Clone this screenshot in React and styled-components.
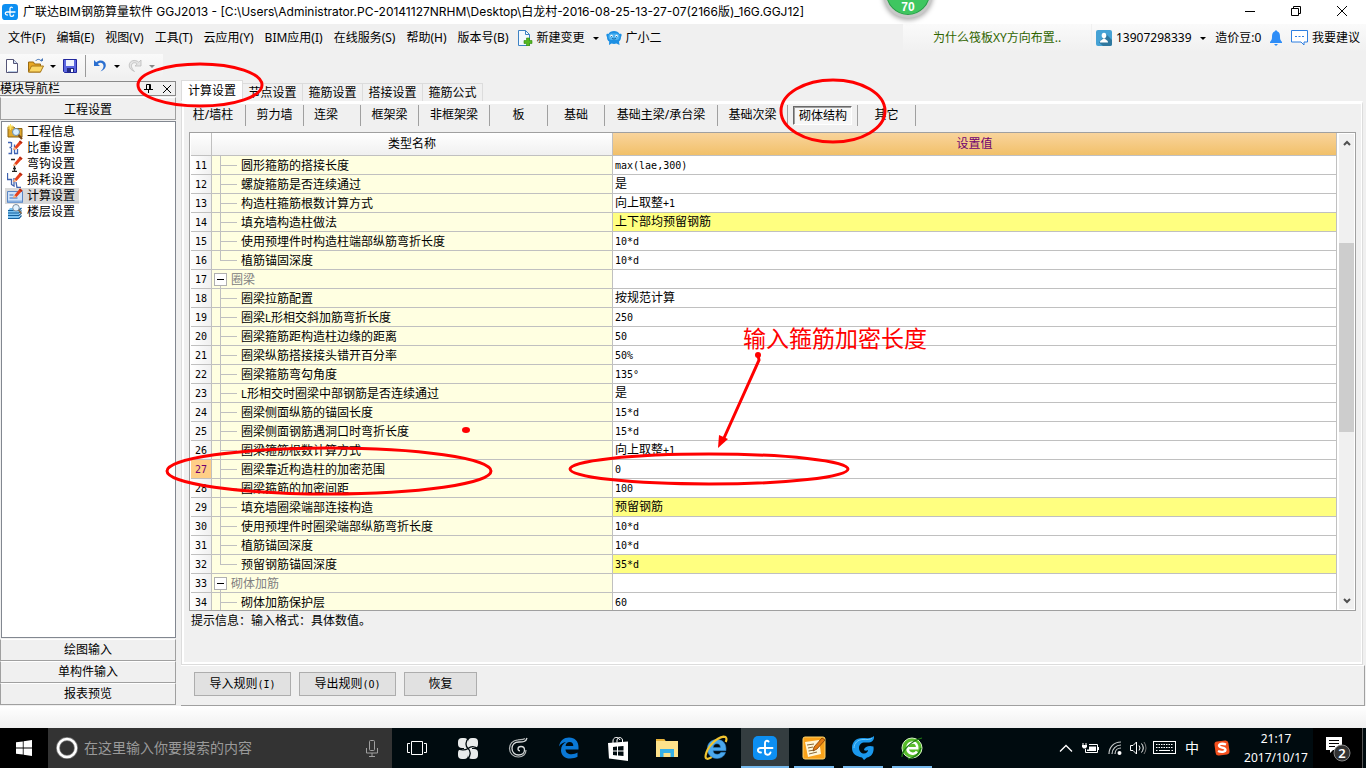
import React from "react";
import styled, { createGlobalStyle, css } from "styled-components";

const GlobalStyle = createGlobalStyle`
  *, *::before, *::after { box-sizing: border-box; }
  html, body, #root { height: 100%; }
  body {
    margin: 0;
    overflow: hidden;
    background: #f0f0f0;
    color: #000;
    font: 12px/16px "Noto Sans", "Noto Sans CJK SC", sans-serif;
  }
  button, input { font: inherit; color: inherit; }
  svg { display: block; flex: none; }
`;

const Screen = styled.div`
  position: relative;
  height: 100vh;
  display: flex;
  flex-direction: column;
  white-space: nowrap;
`;

const PlainButton = styled.button`
  display: flex;
  align-items: center;
  justify-content: center;
  padding: 0;
  border: 0;
  background: none;
`;

/* ---------- title bar ---------- */
const TitleBar = styled.header`
  display: flex;
  align-items: center;
  height: 24px;
  padding-left: 2px;
  background: #fff;
`;
const Title = styled.h1`
  flex: 1;
  margin: 0 0 0 5px;
  font: 400 12px/16px Inter, "Noto Sans CJK SC", sans-serif;
`;
const WindowButton = styled(PlainButton)`
  width: 46px;
  height: 24px;
  padding: 0 2px 3px 0;
`;

/* ---------- menu bar ---------- */
const MenuBar = styled.nav`
  display: flex;
  height: 28px;
  padding-left: 8px;
`;
const MenuItem = styled(PlainButton)`
  height: 28px;
  margin-right: ${(p) => p.$after ?? 11}px;
  gap: 4px;
`;
const News = styled.a`
  display: flex;
  align-items: center;
  width: 188px;
  margin-left: auto;
  padding-left: 30px;
  color: #2f6500;
  text-decoration: none;
  background: linear-gradient(#fafafa, #f0f0f0);
`;
const Account = styled.div`
  display: flex;
  align-items: center;
  width: 274px;
  margin-left: 1px;
  padding: 0 6px 0 4px;
  justify-content: space-between;
  background: linear-gradient(#fafafa, #f0f0f0);
`;
const AccountButton = styled(PlainButton)`
  gap: 4px;
`;
const Caret = styled.span`
  border: 3px solid transparent;
  border-top-color: ${(p) => (p.$dim ? "#888" : "#000")};
  border-bottom: 0;
`;

/* ---------- tool bar ---------- */
const ToolBar = styled.div`
  display: flex;
  align-items: center;
  align-self: flex-start;
  height: 24px;
  margin: 2px 0;
  padding: 0 3px 0 3px;
  background: linear-gradient(#fafafa, #f0f0f0);
`;
const Tool = styled(PlainButton)`
  width: ${(p) => p.$w}px;
  height: 24px;
`;
const ToolSeparator = styled.span`
  width: 1px;
  height: 22px;
  margin: 0 5px 0 2px;
  background: #999;
`;

/* ---------- main area ---------- */
const Main = styled.main`
  flex: 1;
  min-height: 0;
  display: flex;
  gap: 5px;
`;
const Side = styled.aside`
  display: flex;
  flex-direction: column;
  width: 176px;
  padding: 1px 0;
`;
const SideHeader = styled.div`
  display: flex;
  align-items: center;
  height: 15px;
  margin-bottom: 1px;
  padding-right: 1px;
  border: 1px solid #8a8a8a;
  border-left: 0;
`;
const SideTitle = styled.span`
  flex: 1;
`;
const SideHeaderButton = styled(PlainButton)`
  width: 15px;
  height: 13px;
  margin-left: 3px;
`;
const SideSection = styled.button`
  height: 22px;
  padding: 0;
  border: 1px solid #a0a0a0;
  border-top-color: #fff;
  background: #f0f0f0;
  &:first-of-type {
    height: 23px;
    padding-top: 2px;
  }
`;
const SideList = styled.ul`
  flex: 1;
  min-height: 0;
  margin: 1px 0 1px 1px;
  padding: 2px 3px;
  list-style: none;
  border: 1px solid #828790;
  background: #fff;
`;
const SideLink = styled.a`
  display: inline-flex;
  align-items: center;
  gap: 4px;
  height: 16px;
  padding: 0 4px 0 2px;
  vertical-align: top;
  color: #000;
  text-decoration: none;
  background: ${(p) => (p.$active ? "#d9d9d9" : "none")};
`;
const SideItem = styled.li`
  height: 16px;
`;

const Content = styled.section`
  flex: 1;
  min-width: 0;
  display: flex;
  flex-direction: column;
`;
const Tabs = styled.div`
  display: flex;
  align-items: flex-end;
  height: 21px;
`;
const Tab = styled.button`
  height: 18px;
  width: 60px;
  padding: 0;
  border: 1px solid #dcdcdc;
  border-left: 0;
  border-bottom: 0;
  background: #f0f0f0;
  ${(p) =>
    p.$active &&
    css`
      width: 62px;
      height: 21px;
      border-left: 1px solid #dcdcdc;
      background: #fff;
    `}
`;
const TabPage = styled.div`
  flex: 1;
  min-height: 0;
  display: flex;
  flex-direction: column;
  margin-right: 3px;
  padding: 0 4px 0 4px;
  border: 1px solid #dcdcdc;
  border-top: 3px solid #fff;
  box-shadow: inset 2px 0 #fff, inset -1px -2px #fff;
`;
const Categories = styled.div`
  display: flex;
  align-items: center;
  height: 28px;
  margin-left: -1px;
  padding-bottom: 6px;
`;
const Category = styled(PlainButton)`
  width: ${(p) => p.$w}px;
  height: 21px;
  padding-right: ${(p) => p.$pad ?? 0}px;
  border-right: 1px solid #a0a0a0;
`;
const Pressed = styled.span`
  padding: 1px 4px 0 5px;
  border: 1px solid #696969;
  border-right-color: #fff;
  border-bottom-color: #fff;
  background: #f7f7f7;
  box-shadow: inset 1px 1px #a0a0a0;
`;

/* ---------- settings grid ---------- */
const GridFrame = styled.div`
  flex: 1;
  min-height: 0;
  display: flex;
  overflow: hidden;
  margin-right: 2px;
  margin-left: 3px;
  padding-left: 1px;
  border: 1px solid #a0a0a0;
  background: #fff;
`;
const GridViewport = styled.div`
  flex: 1;
  min-width: 0;
  overflow: hidden;
`;
const Grid = styled.table`
  width: 100%;
  table-layout: fixed;
  border-collapse: separate;
  border-spacing: 0;
`;
const HeadCell = styled.th`
  width: ${(p) => (p.$w ? `${p.$w}px` : "auto")};
  height: 23px;
  padding: 0;
  border-right: 1px solid #c0c0c0;
  border-bottom: 1px solid #c0c0c0;
  font-weight: 400;
  color: ${(p) => (p.$active ? "#700070" : "#000")};
  background: ${(p) =>
    p.$active
      ? "linear-gradient(#f9d49c, #f1c069)"
      : "linear-gradient(#fff, #f0f0f0)"};
`;
const NumberCell = styled.th`
  height: 19px;
  padding: 0;
  border-right: 1px solid #c0c0c0;
  border-bottom: 1px solid #c0c0c0;
  font-weight: 400;
  color: ${(p) => (p.$active ? "#700070" : "#000")};
  background: ${(p) =>
    p.$active ? "#ffcf87" : "linear-gradient(90deg, #fff, #f0f0f0)"};
`;
const Cell = styled.td`
  height: 19px;
  padding: 0 0 0 ${(p) => p.$pad ?? 0}px;
  border-right: 1px solid #c0c0c0;
  border-bottom: 1px solid #c0c0c0;
  line-height: 16px;
  background: ${(p) => p.$bg};
`;
const line = "linear-gradient(#c0c0c0, #c0c0c0)";
const Branch = styled.div`
  height: 18px;
  padding: 3px 0 0 29px;
  line-height: 14px;
  background: ${line} 8px 0 / 1px ${(p) => (p.$last ? "9px" : "18px")} no-repeat,
    ${line} 8px 9px / 17px 1px no-repeat;
`;
const Group = styled.div`
  display: flex;
  align-items: center;
  gap: 4px;
  height: 18px;
  padding-left: 2px;
  color: #808080;
  background: ${line} 8px 14px / 1px 4px no-repeat;
`;
const GroupName = styled.span`
  padding-top: 2px;
`;
const Toggle = styled(PlainButton)`
  width: 13px;
  height: 13px;
  border: 1px solid #b0b0b0;
  background: #fff;
  &::before {
    content: "";
    width: 7px;
    height: 1px;
    background: #000;
  }
`;
const Mono = styled.span`
  font-family: "DejaVu Sans Mono", monospace;
  font-size: 10px;
`;
const ScrollBar = styled.div`
  display: flex;
  flex-direction: column;
  align-items: center;
  width: 15px;
  margin: 1px 1px 1px 2px;
  background: #f0f0f0;
`;
const ScrollArrow = styled(PlainButton)`
  width: 15px;
  height: 17px;
`;
const ScrollTrack = styled.div`
  flex: 1;
  align-self: stretch;
  display: flex;
  flex-direction: column;
`;
const ScrollSpace = styled.div`
  flex: ${(p) => p.$share};
`;
const ScrollThumb = styled.div`
  flex: 190;
  background: #cdcdcd;
`;
const Hint = styled.p`
  height: 53px;
  margin: 0;
  padding: 2px 0 0 5px;
`;
const Actions = styled.div`
  display: flex;
  gap: 8px;
  height: 41px;
  margin-right: 1px;
  padding: 6px 0 0 13px;
  border: 1px solid #a0a0a0;
  border-top-color: #fff;
  border-left: 0;
`;
const Action = styled.button`
  width: ${(p) => p.$w}px;
  height: 24px;
  padding: 0;
  border: 1px solid #adadad;
  background: #e1e1e1;
`;
const StatusBar = styled.div`
  height: 22px;
  background: linear-gradient(#fff, #f0f0f0);
`;

/* ---------- task bar ---------- */
const TaskBar = styled.footer`
  display: flex;
  height: 40px;
  background: #000b0f;
  color: #fff;
`;
const Start = styled(PlainButton)`
  width: 48px;
  background: #000;
`;
const Search = styled.label`
  display: flex;
  align-items: center;
  gap: 6px;
  width: 344px;
  padding: 0 14px 0 8px;
  background: #333;
`;
const SearchInput = styled.input`
  flex: 1;
  min-width: 0;
  padding: 0;
  border: 0;
  outline: 0;
  background: none;
  font-size: 14px;
  &::placeholder { color: #9a9a9a; opacity: 1; }
`;
const Apps = styled.div`
  display: flex;
  flex: 1;
  gap: 1px;
`;
const AppButton = styled(PlainButton)`
  width: ${(p) => (p.$wide ? 50 : 48)}px;
  padding-top: 2px;
  border-bottom: 2px solid transparent;
  ${(p) =>
    p.$state === "open" &&
    css`
      background: linear-gradient(#76b9ed, #76b9ed) center bottom / 40px 2px no-repeat;
      background-origin: border-box;
      background-clip: border-box;
    `}
  ${(p) =>
    p.$state === "active" &&
    css`
      background-color: #343d40;
      border-bottom-color: #76b9ed;
    `}
`;
const Tray = styled.div`
  display: flex;
  align-items: center;
`;
const TrayButton = styled(PlainButton)`
  width: ${(p) => p.$w}px;
  height: 40px;
  font-size: 14px;
`;
const Clock = styled.time`
  width: 74px;
  text-align: center;
  line-height: 19px;
`;
const Notices = styled(PlainButton)`
  width: 50px;
  height: 40px;
  padding-top: 2px;
  border-right: 1px solid #555;
  background: #000;
`;
const TrayEnd = styled.span`
  width: 3px;
`;

/* ---------- things that lie over the window ---------- */
const Ball = styled.div`
  position: absolute;
  top: -32px;
  left: 883px;
  width: 50px;
  height: 50px;
  padding-top: 28px;
  border: 3px solid #c8c8c8;
  border-radius: 50%;
  background: #3fc660;
  box-shadow: 0 2px 5px rgba(0, 0, 0, 0.35), inset 0 0 0 1px #2a9a48;
  color: #fff;
  font: 700 12px/16px "Liberation Sans", sans-serif;
  text-align: center;
`;
const Marks = styled.svg`
  position: absolute;
  top: 0;
  left: 0;
  pointer-events: none;
`;
const Note = styled.div`
  position: absolute;
  top: 324px;
  left: 743px;
  color: #f00;
  font: 400 23px/26px "Noto Sans CJK SC", sans-serif;
`;

/* Sets the Latin runs of a label in the narrow fixed-width face. */
function Label({ children }) {
  return children
    .split(/([\x20-\x7e°]+)/)
    .filter(Boolean)
    .map((part, i) =>
      /^[\x20-\x7e°]/.test(part) ? <Mono key={i}>{part}</Mono> : part
    );
}

/* ---------- icons ---------- */
function Svg({ w = 16, h = w, box, children }) {
  return (
    <svg width={w} height={h} viewBox={box || `0 0 ${w} ${h}`} fill="none" aria-hidden="true">
      {children}
    </svg>
  );
}
const BrandIcon = ({ size = 16 }) => (
  <Svg w={size} box="0 0 24 24">
    <rect width="24" height="24" rx="5" fill="#0d8ff2" />
    <path d="M15.500 5.500C14 4 12 5 12 7v9c0 3.500 4.500 3.500 5.500 .5M19.500 12H7.500c-3.500 0-3.500 4.500 .5 4.500" stroke="#fff" strokeWidth="1.900" strokeLinecap="round" />
  </Svg>
);
const NewIcon = () => (
  <Svg>
    <path d="M2.500 1.500h7l4 4v9h-11z" fill="#fff" stroke="#557" />
    <path d="M9.500 1.500v4h4" fill="#cfe0f5" stroke="#557" />
    <path d="M4 13.500h9" stroke="#b8cce6" />
  </Svg>
);
const OpenIcon = () => (
  <Svg w={17} h={16} box="0 0 16 16">
    <path d="M1 14V4h5l1 2h6v8z" fill="#e8a825" stroke="#9a6a10" />
    <path d="M1 14l3-6h12l-3 6z" fill="#fbd765" stroke="#a87718" />
    <path d="M8 3c2-2.500 5-2 6 .5" stroke="#4a78b8" />
    <path d="M12 3h3.500V0z" fill="#4a78b8" />
  </Svg>
);
const SaveIcon = () => (
  <Svg>
    <path d="M1.500 1.500h13v13h-12l-1-1z" fill="#5b67e0" stroke="#22279c" />
    <path d="M4 2h8v6H4z" fill="#eef3fd" />
    <path d="M5 10h7v4H5z" fill="#222a80" />
    <path d="M9 11h2v3H9z" fill="#fff" />
  </Svg>
);
const UndoIcon = () => (
  <Svg>
    <path d="M2 2v6h6L5.800 6C8 3.500 12 5 11.500 8.500c-.3 2-1.500 3.500-3 5C12 12 14 10 13.800 7 13.500 2.500 8 1 4.200 4.200z" fill="#2b6fd0" />
  </Svg>
);
const RedoIcon = () => (
  <Svg>
    <path d="M14 2v6H8l2.200-2C8 3.500 4 5 4.500 8.500c.3 2 1.500 3.500 3 5C4 12 2 10 2.200 7 2.500 2.500 8 1 11.800 4.200z" fill="#e4e4e4" stroke="#bbb" strokeWidth=".8" />
  </Svg>
);
const ChangeIcon = () => (
  <Svg>
    <path d="M1.500 .5h7l4 4v11h-11z" fill="#f3f9ff" stroke="#3d82c4" />
    <path d="M8.500 .5v4h4" stroke="#3d82c4" />
    <path d="M9.500 8h3v2.500H15v3h-2.500V16h-3v-2.500H7v-3h2.500z" fill="#55b822" stroke="#2f8a0c" strokeWidth=".6" />
  </Svg>
);
const RobotIcon = () => (
  <Svg>
    <path d="M1 7C-.5 4 1 3 2.500 4 4 0 12 0 13.500 4 15 3 16.500 4 15 7c0 2-.8 3.500-2 4.500l.5 3.500-3-1.500c-2 .6-3 .6-5 0L3 15l.2-3.500C1.600 10.500 1 9 1 7z" fill="#1c8fe3" />
    <rect x="2.500" y="3.500" width="11" height="6.500" rx="3" fill="#4fb4f2" />
    <circle cx="5.500" cy="6" r="1.200" fill="#fff" />
    <circle cx="10.500" cy="6" r="1.200" fill="#fff" />
    <path d="M5.500 6v1M10.500 6v1M6 8.500q2 1.200 4 0" stroke="#07538f" strokeWidth=".8" />
  </Svg>
);
const UserIcon = () => (
  <Svg>
    <rect width="16" height="16" rx="2" fill="#45a2d5" />
    <path d="M10 4l6 6v4a2 2 0 0 1-2 2H7l-4-3.500z" fill="#2f789f" />
    <ellipse cx="8" cy="5.500" rx="2.300" ry="2.800" fill="#fff" />
    <path d="M4 12.500c0-3 2.500-2 3-4h2c.5 2 3 1 3 4z" fill="#fff" />
  </Svg>
);
const BellIcon = () => (
  <Svg w={12} h={16}>
    <path d="M6 0l1.500 1.500C9.500 2.500 10 4 10 7c0 2 .5 3.500 2 5v1H0v-1c1.500-1.500 2-3 2-5 0-3 .5-4.500 2.500-5.500z" fill="#2e8df7" />
    <path d="M4 14h4l-2 2z" fill="#2e8df7" />
  </Svg>
);
const BubbleIcon = () => (
  <Svg w={17} h={16}>
    <path d="M.5.500h16v11.500h-3.500v3l-3-3H.5z" fill="#fff" stroke="#2e7fe0" />
    <path d="M4 6.500h2M7.500 6.500h2M11 6.500h2" stroke="#2e7fe0" />
  </Svg>
);
const Pencil = () => (
  <>
    <path d="M6 10l1.500-3L13 .500l2.500 2L9.500 9z" fill="#e8401c" />
    <path d="M13 .5l2.500 2-1 1.200L12 1.700z" fill="#b52a10" />
    <path d="M6 10l1.500-3L9.500 9z" fill="#f5c08a" />
  </>
);
const InfoIcon = () => (
  <Svg>
    <path d="M1 3h6l1 1.500h7V13H1z" fill="#e0a82e" stroke="#8a6210" />
    <path d="M3.500 0v6M.5 3h6M1.500 1l4 4M5.500 1l-4 4" stroke="#ffe45c" />
    <circle cx="9" cy="8" r="3.500" fill="#d9efff" stroke="#6a8cab" />
    <path d="M11.500 11l3.500 4" stroke="#7a4a18" strokeWidth="2" />
  </Svg>
);
const WeightIcon = () => (
  <Svg>
    <path d="M1 2.500h3M4.500 2v5M2.500 7.500h2M4.500 8v5.500H1.500M7.500 4.500V13M7 13.500h3.500V9" stroke="#4064b4" strokeWidth="1.300" />
    <Pencil />
  </Svg>
);
const HookIcon = () => (
  <Svg>
    <path d="M4 3.500h4M5 15.500h5M7.500 10v5M6 12.500h3" stroke="#222" strokeWidth="1.300" />
    <Pencil />
  </Svg>
);
const LossIcon = () => (
  <Svg>
    <path d="M.5 1v6.500h4v5L7 14V6M9 10l1 5.500h4" stroke="#3f62ae" strokeWidth="1.300" />
    <Pencil />
  </Svg>
);
const CalcIcon = () => (
  <Svg>
    <path d="M.5 3.500h15v11H.5z" fill="#cfe3fb" stroke="#5b86c4" />
    <path d="M1 13.500h14" stroke="#86aede" strokeWidth="2" />
    <path d="M2.500 7h4M2.500 10h8" stroke="#3f6fb8" />
    <Pencil />
  </Svg>
);
const FloorIcon = () => (
  <Svg>
    <path d="M3 4h11l-2 2.500v8H1V6.500z" fill="#7cc3f2" />
    <path d="M1 6.500h11l2.500-2.500M1 9h11l2.500-2.500M1 11.500h11L14.500 9M1 14.500h11l2.500-3" stroke="#15609c" strokeWidth="1.200" />
    <circle cx="9" cy="3.800" r="3.300" fill="#e3f3ff" stroke="#7c8c9c" />
    <path d="M11.500 6l3 3.500" stroke="#8a6a48" strokeWidth="1.500" />
  </Svg>
);
const WindowsIcon = () => (
  <Svg w={16}>
    <path d="M0 2.300L6.800 1.400v6.200H0zM7.600 1.300L16 0v7.600H7.600zM0 8.400h6.800v6.200L0 13.700zM7.600 8.400H16V16l-8.400-1.300z" fill="#fff" />
  </Svg>
);
const CortanaIcon = () => (
  <Svg w={22}>
    <circle cx="11" cy="11" r="9" stroke="#777" strokeWidth="4" />
    <circle cx="11" cy="11" r="9" stroke="#fff" strokeWidth="2.500" />
  </Svg>
);
const MicIcon = () => (
  <Svg w={12} h={17}>
    <rect x="3.500" y=".5" width="5" height="10" rx="1" stroke="#a0a0a0" />
    <path d="M.5 8v5h11V8M6 13v3.500M3 16.500h6" stroke="#a0a0a0" />
  </Svg>
);
const TaskViewIcon = () => (
  <Svg w={20} h={16}>
    <path d="M4.500 1.500h11v13h-11zM3 3.500H.5v9H3M17 3.500h2.500v9H17" stroke="#fff" />
  </Svg>
);
const PinwheelIcon = () => (
  <Svg w={22} h={23}>
    <g fill="#e8ebeb">
      <rect x="1" y="1" width="10" height="10" rx="4" />
      <rect x="11" y="1" width="10" height="10" rx="4" />
      <rect x="1" y="12" width="10" height="10" rx="4" />
      <rect x="11" y="12" width="10" height="10" rx="4" />
      <path d="M7 7h8v9H7z" />
    </g>
    <path d="M11 11.500C8 9 8.500 4 12 .5M11 11.500c3-2.500 7-2.500 11 1M11 11.500c3 2.500 3 7-.5 11M11 11.500c-3 2-8 2-11-1" stroke="#000b0f" strokeWidth="1.300" />
  </Svg>
);
const SwirlIcon = () => (
  <Svg w={22}>
    <path d="M19 1c-1 4-4 4-8 4-5 0-7 3-7 6.500 0 4 3 6.500 6.500 6.500 4 0 6-2.500 6-5 0-2-1.500-3.500-3.500-3.500s-3 1-3 2.500c0 1 .8 1.800 2 1.800" stroke="#d8dcdc" strokeWidth="1.300" />
    <path d="M17 1.500c-2 1.500-4 1-7 1.300C4.500 3.200 1.500 7 1.500 11.500c0 5 4 8.500 9 8.500 4.500 0 7.500-3 7.500-7" stroke="#b0b5b5" strokeWidth="1.200" />
  </Svg>
);
const EdgeIcon = () => (
  <Svg w={22}>
    <path d="M1 9.500C2 3.500 6 .5 11 .5c6 0 9.500 4 9.500 9.500v2.500H7.500c.2 3.200 2.500 4.700 6 4.700 2.300 0 4.300-.6 6-1.600v4.200c-2 1.200-4.500 1.700-7.300 1.700C6.500 21.500 3 18 3 13.200 3 9.500 5 6.500 8 5 5 5.300 2.500 7 1 9.500zM7.600 9h7.700c0-2.500-1.300-4-3.600-4S7.900 6.500 7.600 9z" fill="#0a78d6" />
  </Svg>
);
const StoreIcon = () => (
  <Svg w={21} h={25} box="0 0 21 25">
    <path d="M0 7l20-1.500V25L1 22.500z" fill="#fff" />
    <path d="M5 7V5c0-4 5-5 7-1M9 6.500V4c1-3.500 5-3 5.500 0v2" stroke="#fff" />
    <path d="M5 11l4-.4v4H5zM10 10.500l5.500-.5v4.600H10zM5 15.500h4v4l-4-.5zM10 15.500h5.500V20l-5.500-.5z" fill="#000b0f" />
  </Svg>
);
const FolderIcon = () => (
  <Svg w={22} h={20}>
    <path d="M0 1h8l1.500 2H22v16H0z" fill="#fde28b" />
    <path d="M0 1h8l1.500 2H0z" fill="#e8b33a" />
    <path d="M4 19v-8h14v8h-3.500v-4h-7v4z" fill="#35b0e8" />
  </Svg>
);
const IeIcon = () => (
  <Svg w={26} box="0 0 24 24">
    <path d="M4 12c.5-5 4-7.800 8.800-7.800 6 0 9 4.300 8.400 10.300H9.300c.3 2.200 1.700 3.300 3.900 3.300 1.600 0 2.700-.6 3.300-1.800h4.300c-1 3.700-4.200 5.700-7.800 5.700-5.700 0-9.100-4-9-9.700zM9.400 11.500h6.700c0-2.200-1.300-3.400-3.200-3.400-2 0-3.200 1.200-3.500 3.400z" fill="#4aa8ec" stroke="#2c7cc4" strokeWidth=".5" />
    <path d="M8 20.500c-3 2-6.500 2.500-5.500-2C4 11 12 2.500 19 1.500c3 0 3.200 2.500 2 5" stroke="#f2c530" strokeWidth="2" />
  </Svg>
);
const NotesIcon = () => (
  <Svg w={24}>
    <rect x="1" y="1" width="22" height="22" rx="2" fill="#f9a21a" stroke="#ffd36a" />
    <path d="M3 6l14-2 2 14-13 3z" fill="#fff6d8" />
    <path d="M5 9l7-1M6 12l5-1M6.500 15l6-1M7 18l8-2" stroke="#8a6a38" />
    <path d="M11 15l1-4 8-9 3 2-8 9z" fill="#e47c12" stroke="#7a3c08" strokeWidth=".8" />
  </Svg>
);
const BlueSwirlIcon = () => (
  <Svg w={24}>
    <path d="M23 0c.5 5-3 7-8 6.500-4-.5-7 1.500-7 5.500 0 3.500 2.500 5.500 5 5.500 2.300 0 3.800-1.300 4-3.500-1.500 1-3.500 1-4-.5 1-3 5-4.500 9.500-3 1 7-3 10.500-6.500 11l-3 2.500-2-2.500C5 20.500 1 17.500 1 12 1 6 5 2 11 2c5 0 9 1 12-2z" fill="#1a98ec" />
    <path d="M3 12c0-5 4-8.500 9-8.500 4 0 7 .5 9-1.500" stroke="#6ccbff" />
  </Svg>
);
const GreenEIcon = () => (
  <Svg w={22} h={24}>
    <circle cx="11" cy="12" r="10" fill="#58bd2a" stroke="#d5f2c4" />
    <path d="M16 15.500c-2 3.500-9.500 3-9.500-3.500s7.500-6.500 9-3.500c.7 1.300 .8 2.300 .7 3.700H7" stroke="#fff" strokeWidth="2.600" />
    <path d="M1 21c-.5-5 8-16 20-19M7 23c6-1 11-5 13-11" stroke="#1d7a12" strokeWidth="1.200" />
  </Svg>
);
const ChevronIcon = () => (
  <Svg w={14} h={8}><path d="M1 7.500l6-6 6 6" stroke="#fff" strokeWidth="1.300" /></Svg>
);
const BatteryIcon = () => (
  <Svg w={17} h={12}>
    <path d="M7 2.500h8.500v8H3.500V7" stroke="#fff" />
    <path d="M7 4.500h7v4.500H5V7.500h2zM16 5h1v3h-1z" fill="#fff" />
    <path d="M1 1v2M4 1v2" stroke="#fff" />
    <path d="M0 3h5v2L3.500 6.500h-2L0 5z" fill="#fff" />
  </Svg>
);
const WifiIcon = () => (
  <Svg w={14}>
    <path d="M1 13C1 6 6 1 13 1M4 13c0-5 4-9 9-9M7 13c0-3.500 2.500-6 6-6" stroke="#c8cccc" strokeWidth="1.200" />
    <circle cx="11.500" cy="12" r="2" fill="#fff" />
  </Svg>
);
const SpeakerIcon = () => (
  <Svg w={17} h={14}>
    <path d="M.5 4.500h2.500L6.500 1v12L3 9.500H.5z" stroke="#fff" />
    <path d="M9 4.500q2 2.500 0 5M11.500 2.500q3.500 4.500 0 9" stroke="#fff" />
    <path d="M14 1q4 6 0 12" stroke="#777" />
  </Svg>
);
const KeyboardIcon = () => (
  <Svg w={23} h={14}>
    <rect x=".5" y=".5" width="22" height="12" stroke="#fff" />
    <path d="M3 3.500h17M3 6.500h17" stroke="#fff" strokeDasharray="1.500 1" />
    <path d="M3 9.500h1.500M6 9.500h11M18.500 9.500H20" stroke="#fff" />
  </Svg>
);
const SogouIcon = () => (
  <Svg w={16}>
    <rect x="1" y="1" width="14" height="14" rx="3" fill="#f4501e" transform="rotate(-8 8 8)" />
    <path d="M12 4.500C8 3 4.500 4 5 6s6.500 1.500 6.500 3.800S7 12.500 4 11" stroke="#fff" strokeWidth="2.300" />
  </Svg>
);
const NoticeIcon = () => (
  <svg width="26" height="26" viewBox="0 0 26 26" role="img" aria-label="2">
    <path d="M1 1h16v13H8l-3 3v-3H1z" fill="#fff" />
    <path d="M4 4.500h10M4 7.500h10M4 10.500h6" stroke="#000" />
    <circle cx="17" cy="17" r="8" fill="#333" stroke="#888" />
    <text x="17" y="22" textAnchor="middle" fill="#fff" fontSize="13" fontWeight="600">2</text>
  </svg>
);

/* ---------- data ---------- */
const menus = ["文件(F)", "编辑(E)", "视图(V)", "工具(T)", "云应用(Y)", "BIM应用(I)", "在线服务(S)", "帮助(H)"];
const sideItems = [
  ["工程信息", InfoIcon],
  ["比重设置", WeightIcon],
  ["弯钩设置", HookIcon],
  ["损耗设置", LossIcon],
  ["计算设置", CalcIcon],
  ["楼层设置", FloorIcon],
];
const tabs = ["计算设置", "节点设置", "箍筋设置", "搭接设置", "箍筋公式"];
const categories = [
  ["柱/墙柱", 61, 4], ["剪力墙", 58], ["连梁", 57, 12], ["框架梁", 58], ["非框架梁", 71],
  ["板", 58], ["基础", 57], ["基础主梁/承台梁", 113], ["基础次梁", 70], ["砌体结构", 70], ["其它", 58],
];
const rows = [
  { no: 11, name: "圆形箍筋的搭接长度", value: "max(lae,300)" },
  { no: 12, name: "螺旋箍筋是否连续通过", value: "是" },
  { no: 13, name: "构造柱箍筋根数计算方式", value: "向上取整+1" },
  { no: 14, name: "填充墙构造柱做法", value: "上下部均预留钢筋", changed: true },
  { no: 15, name: "使用预埋件时构造柱端部纵筋弯折长度", value: "10*d" },
  { no: 16, name: "植筋锚固深度", value: "10*d", last: true },
  { no: 17, name: "圈梁", group: true, value: "" },
  { no: 18, name: "圈梁拉筋配置", value: "按规范计算" },
  { no: 19, name: "圈梁L形相交斜加筋弯折长度", value: "250" },
  { no: 20, name: "圈梁箍筋距构造柱边缘的距离", value: "50" },
  { no: 21, name: "圈梁纵筋搭接接头错开百分率", value: "50%" },
  { no: 22, name: "圈梁箍筋弯勾角度", value: "135°" },
  { no: 23, name: "L形相交时圈梁中部钢筋是否连续通过", value: "是" },
  { no: 24, name: "圈梁侧面纵筋的锚固长度", value: "15*d" },
  { no: 25, name: "圈梁侧面钢筋遇洞口时弯折长度", value: "15*d" },
  { no: 26, name: "圈梁箍筋根数计算方式", value: "向上取整+1" },
  { no: 27, name: "圈梁靠近构造柱的加密范围", value: "0", active: true },
  { no: 28, name: "圈梁箍筋的加密间距", value: "100" },
  { no: 29, name: "填充墙圈梁端部连接构造", value: "预留钢筋", changed: true },
  { no: 30, name: "使用预埋件时圈梁端部纵筋弯折长度", value: "10*d" },
  { no: 31, name: "植筋锚固深度", value: "10*d" },
  { no: 32, name: "预留钢筋锚固深度", value: "35*d", changed: true, last: true },
  { no: 33, name: "砌体加筋", group: true, value: "" },
  { no: 34, name: "砌体加筋保护层", value: "60" },
];
const apps = [
  ["任务视图", TaskViewIcon], ["浏览器助手", PinwheelIcon], ["云助手", SwirlIcon], ["Edge", EdgeIcon],
  ["应用商店", StoreIcon], ["文件资源管理器", FolderIcon], ["Internet Explorer", IeIcon],
  ["钢筋算量", () => <BrandIcon size={24} />, "active"], ["便笺", NotesIcon, "open"],
  ["广联达", BlueSwirlIcon, "open"], ["360浏览器", GreenEIcon, "open"],
];

export default function App() {
  return (
    <Screen>
      <GlobalStyle />
      <TitleBar>
        <BrandIcon />
        <Title>
          广联达BIM钢筋算量软件 GGJ2013 - [C:\Users\Administrator.PC-20141127NRHM\Desktop\白龙村-2016-08-25-13-27-07(2166版)_16G.GGJ12]
        </Title>
        <WindowButton aria-label="最小化"><Svg w={10}><path d="M0 5.500h10" stroke="#000" /></Svg></WindowButton>
        <WindowButton aria-label="还原"><Svg w={10}><path d="M.5 2.500h7v7h-7zM2.500 2V.5h7v7H8" stroke="#000" /></Svg></WindowButton>
        <WindowButton aria-label="关闭"><Svg w={10}><path d="M0 0l10 10M10 0L0 10" stroke="#000" /></Svg></WindowButton>
      </TitleBar>

      <MenuBar>
        {menus.map((m) => <MenuItem key={m}>{m}</MenuItem>)}
        <MenuItem $after={8}>版本号(B)</MenuItem>
        <MenuItem $after={8}><ChangeIcon />新建变更</MenuItem>
        <MenuItem $after={7} aria-label="更多"><Caret /></MenuItem>
        <MenuItem $after={0}><RobotIcon />广小二</MenuItem>
        <News href="#news">为什么筏板XY方向布置..</News>
        <Account>
          <AccountButton><UserIcon />13907298339</AccountButton>
          <Caret />
          <span>造价豆:0</span>
          <AccountButton aria-label="消息"><BellIcon /></AccountButton>
          <AccountButton><BubbleIcon />我要建议</AccountButton>
        </Account>
      </MenuBar>

      <ToolBar>
        <Tool $w={18} aria-label="新建"><NewIcon /></Tool>
        <Tool $w={28} aria-label="打开"><OpenIcon /></Tool>
        <Tool $w={8} aria-label="打开列表"><Caret /></Tool>
        <Tool $w={26} aria-label="保存"><SaveIcon /></Tool>
        <ToolSeparator />
        <Tool $w={18} aria-label="撤销"><UndoIcon /></Tool>
        <Tool $w={16} aria-label="撤销列表"><Caret /></Tool>
        <Tool $w={19} aria-label="恢复"><RedoIcon /></Tool>
        <Tool $w={16} aria-label="恢复列表"><Caret $dim /></Tool>
      </ToolBar>

      <Main>
        <Side>
          <SideHeader>
            <SideTitle>模块导航栏</SideTitle>
            <SideHeaderButton aria-label="固定">
              <Svg w={9}><path d="M2.500 5V.500h4V5M0 5.500h9M4.500 6v3M5.500 1v4" stroke="#000" /></Svg>
            </SideHeaderButton>
            <SideHeaderButton aria-label="关闭">
              <Svg w={8}><path d="M0 0l8 8M8 0L0 8" stroke="#000" /></Svg>
            </SideHeaderButton>
          </SideHeader>
          <SideSection>工程设置</SideSection>
          <SideList>
            {sideItems.map(([text, Icon]) => (
              <SideItem key={text}>
                <SideLink href="#settings" $active={text === "计算设置"}><Icon />{text}</SideLink>
              </SideItem>
            ))}
          </SideList>
          <SideSection>绘图输入</SideSection>
          <SideSection>单构件输入</SideSection>
          <SideSection>报表预览</SideSection>
        </Side>

        <Content>
          <Tabs role="tablist">
            {tabs.map((t, i) => (
              <Tab key={t} role="tab" aria-selected={i === 0} $active={i === 0}>{t}</Tab>
            ))}
          </Tabs>
          <TabPage>
            <Categories>
              {categories.map(([text, w, pad]) => (
                <Category key={text} $w={w} $pad={pad}>
                  {text === "砌体结构" ? <Pressed>{text}</Pressed> : text}
                </Category>
              ))}
            </Categories>
            <GridFrame>
              <GridViewport>
                <Grid>
                  <thead>
                    <tr>
                      <HeadCell $w={21} />
                      <HeadCell $w={401}>类型名称</HeadCell>
                      <HeadCell $active>设置值</HeadCell>
                    </tr>
                  </thead>
                  <tbody>
                    {rows.map((r) => (
                      <tr key={r.no}>
                        <NumberCell scope="row" $active={r.active}><Mono>{r.no}</Mono></NumberCell>
                        <Cell $bg="#ffffe1">
                          {r.group ? (
                            <Group><Toggle aria-label="折叠" /><GroupName>{r.name}</GroupName></Group>
                          ) : (
                            <Branch $last={r.last}><Label>{r.name}</Label></Branch>
                          )}
                        </Cell>
                        <Cell $pad={2} $bg={r.changed ? "#ffff80" : "#fff"}><Label>{r.value}</Label></Cell>
                      </tr>
                    ))}
                  </tbody>
                </Grid>
              </GridViewport>
              <ScrollBar>
                <ScrollArrow aria-label="向上"><Svg w={8} h={6}><path d="M1 5l3-3 3 3" stroke="#505050" strokeWidth="2" /></Svg></ScrollArrow>
                <ScrollTrack>
                  <ScrollSpace $share={92} />
                  <ScrollThumb />
                  <ScrollSpace $share={160} />
                </ScrollTrack>
                <ScrollArrow aria-label="向下"><Svg w={8} h={6}><path d="M1 1l3 3 3-3" stroke="#505050" strokeWidth="2" /></Svg></ScrollArrow>
              </ScrollBar>
            </GridFrame>
            <Hint>提示信息：输入格式：具体数值。</Hint>
          </TabPage>
          <Actions>
            <Action $w={97}><Label>导入规则(I)</Label></Action>
            <Action $w={97}><Label>导出规则(O)</Label></Action>
            <Action $w={73}>恢复</Action>
          </Actions>
        </Content>
      </Main>
      <StatusBar />

      <TaskBar>
        <Start aria-label="开始"><WindowsIcon /></Start>
        <Search>
          <CortanaIcon />
          <SearchInput placeholder="在这里输入你要搜索的内容" aria-label="搜索" />
          <MicIcon />
        </Search>
        <Apps>
          {apps.map(([name, Icon, state], i) => (
            <AppButton key={name} aria-label={name} $state={state} $wide={i < 3}><Icon /></AppButton>
          ))}
        </Apps>
        <Tray>
          <TrayButton $w={24} aria-label="显示隐藏的图标"><ChevronIcon /></TrayButton>
          <TrayButton $w={25} aria-label="电源"><BatteryIcon /></TrayButton>
          <TrayButton $w={24} aria-label="网络"><WifiIcon /></TrayButton>
          <TrayButton $w={22} aria-label="音量"><SpeakerIcon /></TrayButton>
          <TrayButton $w={30} aria-label="键盘"><KeyboardIcon /></TrayButton>
          <TrayButton $w={26}>中</TrayButton>
          <TrayButton $w={34} aria-label="输入法"><SogouIcon /></TrayButton>
          <Clock>21:17<br />2017/10/17</Clock>
          <Notices aria-label="通知"><NoticeIcon /></Notices>
          <TrayEnd />
        </Tray>
      </TaskBar>

      <Ball>70</Ball>
      <Marks width="1366" height="768" viewBox="0 0 1366 768" fill="none" stroke="#f00" strokeWidth="3" aria-hidden="true">
        <ellipse cx="200" cy="85" rx="62" ry="21" />
        <ellipse cx="833" cy="111" rx="52" ry="31" />
        <ellipse cx="329" cy="471" rx="162" ry="23" />
        <ellipse cx="709" cy="469" rx="139" ry="15" />
        <path d="M758 355l1 5-35 78" />
        <g fill="#f00" stroke="none">
          <circle cx="758" cy="355" r="3" />
          <ellipse cx="466" cy="430" rx="4" ry="3" />
          <path d="M719 435l9 4-10 9z" />
        </g>
      </Marks>
      <Note>输入箍筋加密长度</Note>
    </Screen>
  );
}
